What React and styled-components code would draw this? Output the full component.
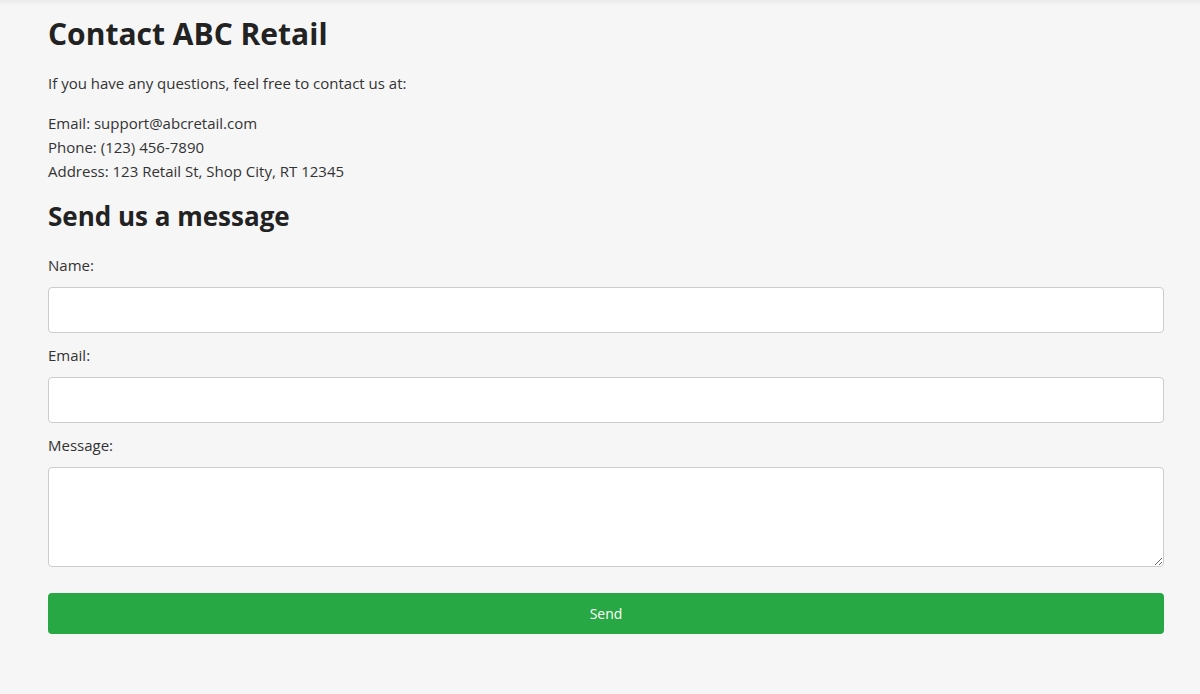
import React from 'react';
import styled, { createGlobalStyle } from 'styled-components';

// ページ全体の基本スタイル
const GlobalStyle = createGlobalStyle`
    body {
        margin: 0;
        padding: 0;
        background: #f6f6f6;
        font-family: "Open Sans", "Noto Sans", sans-serif;
        color: #333;
    }
`;

const Page = styled.div`
    min-height: 694px;
    box-sizing: border-box;
    padding: 15px 36px 40px 48px;
    box-shadow: inset 0 7px 6px -6px rgba(0, 0, 0, 0.08);
`;

const Title = styled.h1`
    margin: 0 0 18px;
    font-size: 30px;
    line-height: 38px;
    font-weight: 700;
    color: #222;
`;

const SubTitle = styled.h2`
    margin: 18px 0 21px;
    font-size: 26px;
    line-height: 31px;
    font-weight: 700;
    color: #222;
`;

const Text = styled.p`
    margin: 0 0 16px;
    font-size: 15px;
    line-height: 24px;
`;

const Info = styled.div`
    font-size: 15px;
    line-height: 24px;
`;

const Form = styled.form`
    display: flex;
    flex-direction: column;
`;

const Label = styled.label`
    font-size: 15px;
    line-height: 24px;
    margin-bottom: 10px;
`;

const Input = styled.input`
    box-sizing: border-box;
    width: 100%;
    height: 46px;
    margin-bottom: 10px;
    border: 1px solid #ccc;
    border-radius: 4px;
    background: #fff;
    font: inherit;
`;

const TextArea = styled.textarea`
    box-sizing: border-box;
    width: 100%;
    height: 100px;
    border: 1px solid #ccc;
    border-radius: 4px;
    background: #fff;
    font: inherit;
`;

const SendButton = styled.button`
    margin-top: 26px;
    height: 41px;
    border: none;
    border-radius: 4px;
    background: #28a745;
    color: #fff;
    font-family: "Open Sans", "Noto Sans", sans-serif;
    font-size: 14px;
    cursor: pointer;
`;

const App = () => {
    return (
        <>
            <GlobalStyle />
            <Page>
                <Title>Contact ABC Retail</Title>
                <Text>If you have any questions, feel free to contact us at:</Text>
                <Info>
                    Email: support@abcretail.com<br />
                    Phone: (123) 456-7890<br />
                    Address: 123 Retail St, Shop City, RT 12345
                </Info>
                <SubTitle>Send us a message</SubTitle>
                <Form onSubmit={(e) => e.preventDefault()}>
                    <Label htmlFor="name">Name:</Label>
                    <Input id="name" type="text" />
                    <Label htmlFor="email">Email:</Label>
                    <Input id="email" type="email" />
                    <Label htmlFor="message">Message:</Label>
                    <TextArea id="message" />
                    <SendButton type="submit">Send</SendButton>
                </Form>
            </Page>
        </>
    );
};

export default App;
